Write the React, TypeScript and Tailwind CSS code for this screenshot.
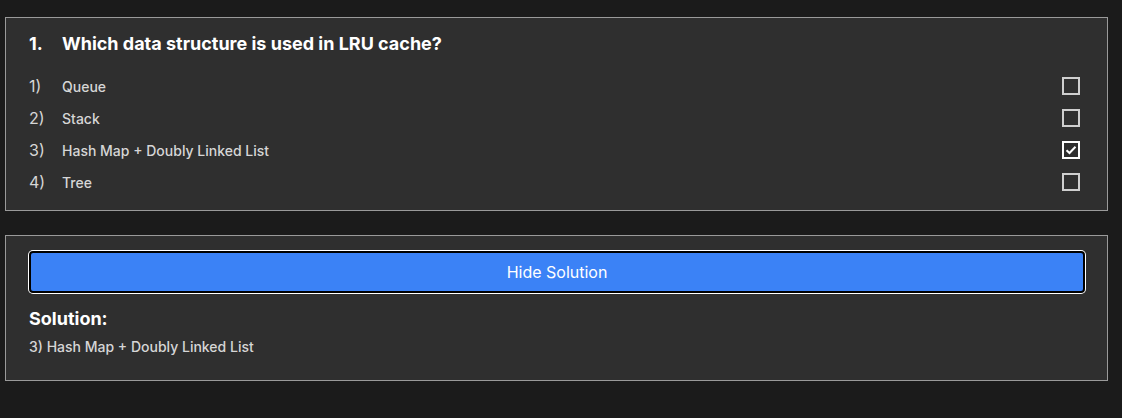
import { useState } from "react";

const options = ["Queue", "Stack", "Hash Map + Doubly Linked List", "Tree"];

export default function App() {
  const [checked, setChecked] = useState<number>(2);
  const [show, setShow] = useState(true);

  return (
    <div className="min-h-screen w-full bg-[#1b1b1b] pt-[17px] pl-[5px] font-['Inter',sans-serif]">
      <div className="w-[1103px]">
        {/* QUESTION */}
        <section className="border border-[#9a9a9a] bg-[#2f2f2f] pt-[14px] pb-[12px] pl-[23px] pr-[27px]">
          <h2 className="flex text-[18px] leading-6 font-bold text-white">
            <span className="w-[33px] shrink-0">1.</span>
            <span>Which data structure is used in LRU cache?</span>
          </h2>
          <ul className="mt-[14px]">
            {options.map((opt, i) => (
              <li key={i} className="flex h-8 items-center text-[#d6d6d6]">
                <span className="w-[33px] shrink-0 text-base">{i + 1})</span>
                <span className="flex-1 text-[14px] font-medium">{opt}</span>
                <button
                  onClick={() => setChecked(i)}
                  className={`flex h-[18px] w-[18px] items-center justify-center border-2 ${
                    checked === i ? "border-white" : "border-[#cfcfcf]"
                  }`}
                >
                  {checked === i && (
                    <svg width="12" height="10" viewBox="0 0 12 10" fill="none">
                      <path d="M1.5 5.2 4.5 8 10.5 1.8" stroke="white" strokeWidth="2" />
                    </svg>
                  )}
                </button>
              </li>
            ))}
          </ul>
        </section>

        {/* SOLUTION */}
        <section className="mt-6 border border-[#9a9a9a] bg-[#2f2f2f] pt-[15px] pb-[23px] pl-[23px] pr-[22px]">
          <button
            onClick={() => setShow(!show)}
            className="h-[42px] w-full rounded-[4px] border-2 border-black bg-[#3b82f6] text-base text-white ring-1 ring-white"
          >
            {show ? "Hide Solution" : "Show Solution"}
          </button>
          {show && (
            <div className="mt-[14px]">
              <h3 className="text-[18px] leading-6 font-bold text-white">Solution:</h3>
              <p className="mt-[6px] text-[14px] leading-5 font-medium text-[#d6d6d6]">
                3) Hash Map + Doubly Linked List
              </p>
            </div>
          )}
        </section>
      </div>
    </div>
  );
}
